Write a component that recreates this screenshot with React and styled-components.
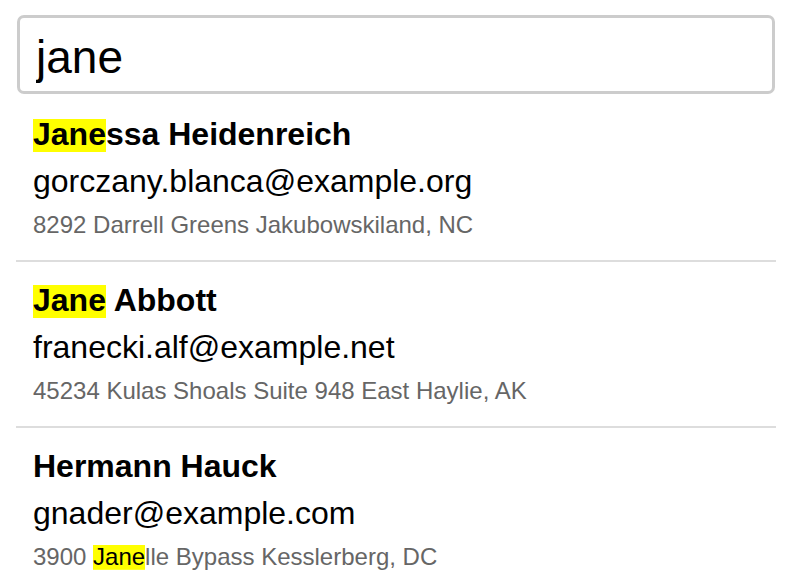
import React, { useState } from "react";
import styled, { createGlobalStyle } from "styled-components";

const GlobalStyle = createGlobalStyle`
  body {
    margin: 0;
    background: #fff;
    font-family: "Liberation Sans", Arial, sans-serif;
  }
`;

const people = [
  {
    name: "Janessa Heidenreich",
    email: "gorczany.blanca@example.org",
    address: "8292 Darrell Greens Jakubowskiland, NC",
  },
  {
    name: "Jane Abbott",
    email: "franecki.alf@example.net",
    address: "45234 Kulas Shoals Suite 948 East Haylie, AK",
  },
  {
    name: "Hermann Hauck",
    email: "gnader@example.com",
    address: "3900 Janelle Bypass Kesslerberg, DC",
  },
];

// wrap every match of the query in a <Mark>
const highlight = (text, query) => {
  if (!query) return text;
  const lower = text.toLowerCase();
  const q = query.toLowerCase();
  const parts = [];
  let i = 0;
  let idx = lower.indexOf(q);
  while (idx !== -1) {
    if (idx > i) parts.push(text.slice(i, idx));
    parts.push(<Mark key={idx}>{text.slice(idx, idx + q.length)}</Mark>);
    i = idx + q.length;
    idx = lower.indexOf(q, i);
  }
  if (i < text.length) parts.push(text.slice(i));
  return parts;
};

const App = () => {
  const [query, setQuery] = useState("jane");

  return (
    <Wrapper>
      <GlobalStyle />
      <SearchInput value={query} onChange={(e) => setQuery(e.target.value)} />
      <List>
        {people.map((p) => (
          <Item key={p.email}>
            <Name>{highlight(p.name, query)}</Name>
            <Email>{highlight(p.email, query)}</Email>
            <Address>{highlight(p.address, query)}</Address>
          </Item>
        ))}
      </List>
    </Wrapper>
  );
};

const Wrapper = styled.div`
  width: 760px;
  padding: 15px 0 0 16px;
`;

const SearchInput = styled.input`
  display: block;
  box-sizing: border-box;
  width: 758px;
  height: 79px;
  margin: 0 0 2px 1px;
  padding: 4px 16px 0;
  border: 3px solid #ccc;
  border-radius: 7px;
  font-family: "Liberation Sans", Arial, sans-serif;
  font-size: 46px;
  color: #000;
  outline: none;
`;

const List = styled.ul`
  list-style: none;
  margin: 0;
  padding: 0;
`;

const Item = styled.li`
  padding: 18px 17px 20px;
  border-bottom: 2px solid #ddd;

  &:last-child {
    border-bottom: none;
  }
`;

const Name = styled.div`
  font-size: 32px;
  font-weight: 700;
  line-height: 40px;
  color: #000;
`;

const Email = styled.div`
  margin-top: 7px;
  font-size: 32px;
  line-height: 40px;
  color: #000;
`;

const Address = styled.div`
  margin-top: 9px;
  font-size: 24px;
  line-height: 30px;
  color: #666;
`;

const Mark = styled.mark`
  background: linear-gradient(#ff0, #ff0) left bottom / 100% 92% no-repeat;
  color: #000;
`;

export default App;
